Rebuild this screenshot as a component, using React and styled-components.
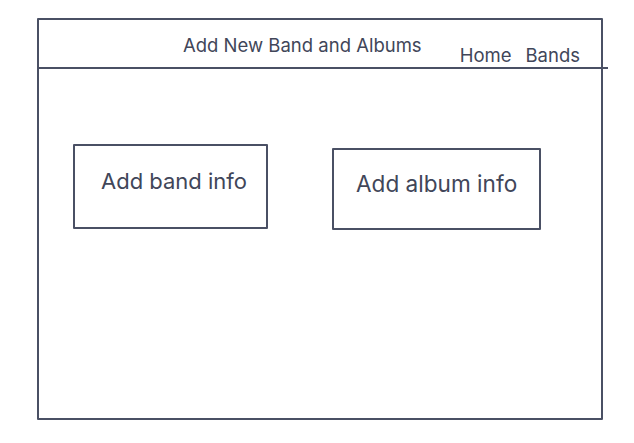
import React from 'react';
import styled, { createGlobalStyle } from 'styled-components';

const ink = '#4a5064';
const text = '#414659';

const GlobalStyle = createGlobalStyle`
  body {
    margin: 0;
    background: #ffffff;
    font-family: Inter, "Noto Sans", sans-serif;
    color: ${text};
  }
`;

const Frame = styled.div`
  margin: 18px 0 0 37px;
  width: 566px;
  height: 402px;
  box-sizing: border-box;
  border: 2px solid ${ink};
  border-radius: 1px;
  display: flex;
  flex-direction: column;
`;

const Header = styled.header`
  height: 49px;
  box-sizing: border-box;
  display: flex;
  align-items: flex-start;
  padding: 13px 0 0 144px;
  border-bottom: 2px solid ${ink};
  margin-right: -7px;
`;

const Title = styled.h1`
  margin: 0;
  font-size: 18.5px;
  font-weight: 400;
  line-height: 24px;
  white-space: nowrap;
`;

const Nav = styled.nav`
  display: flex;
  gap: 14px;
  margin: 10px 0 0 38px;
`;

const NavLink = styled.a`
  font-size: 18.5px;
  line-height: 24px;
  color: ${text};
  text-decoration: none;
`;

const Body = styled.main`
  display: flex;
  align-items: flex-start;
  padding-left: 34px;
`;

const InfoBox = styled.div`
  box-sizing: border-box;
  width: ${(p) => p.w}px;
  height: ${(p) => p.h}px;
  margin-top: ${(p) => p.top}px;
  margin-left: ${(p) => p.left}px;
  border: 2px solid ${ink};
  border-radius: 1px;
  display: flex;
  align-items: center;
  padding: 0 0 12px ${(p) => p.pad}px;
  font-size: ${(p) => p.size}px;
  white-space: nowrap;
`;

export default function App() {
  return (
    <>
      <GlobalStyle />
      <Frame>
        <Header>
          <Title>Add New Band and Albums</Title>
          <Nav>
            <NavLink>Home</NavLink>
            <NavLink>Bands</NavLink>
          </Nav>
        </Header>
        <Body>
          <InfoBox w={195} h={85} top={75} left={0} pad={26} size={22}>
            Add band info
          </InfoBox>
          <InfoBox w={209} h={82} top={79} left={64} pad={22} size={22.6}>
            Add album info
          </InfoBox>
        </Body>
      </Frame>
    </>
  );
}
